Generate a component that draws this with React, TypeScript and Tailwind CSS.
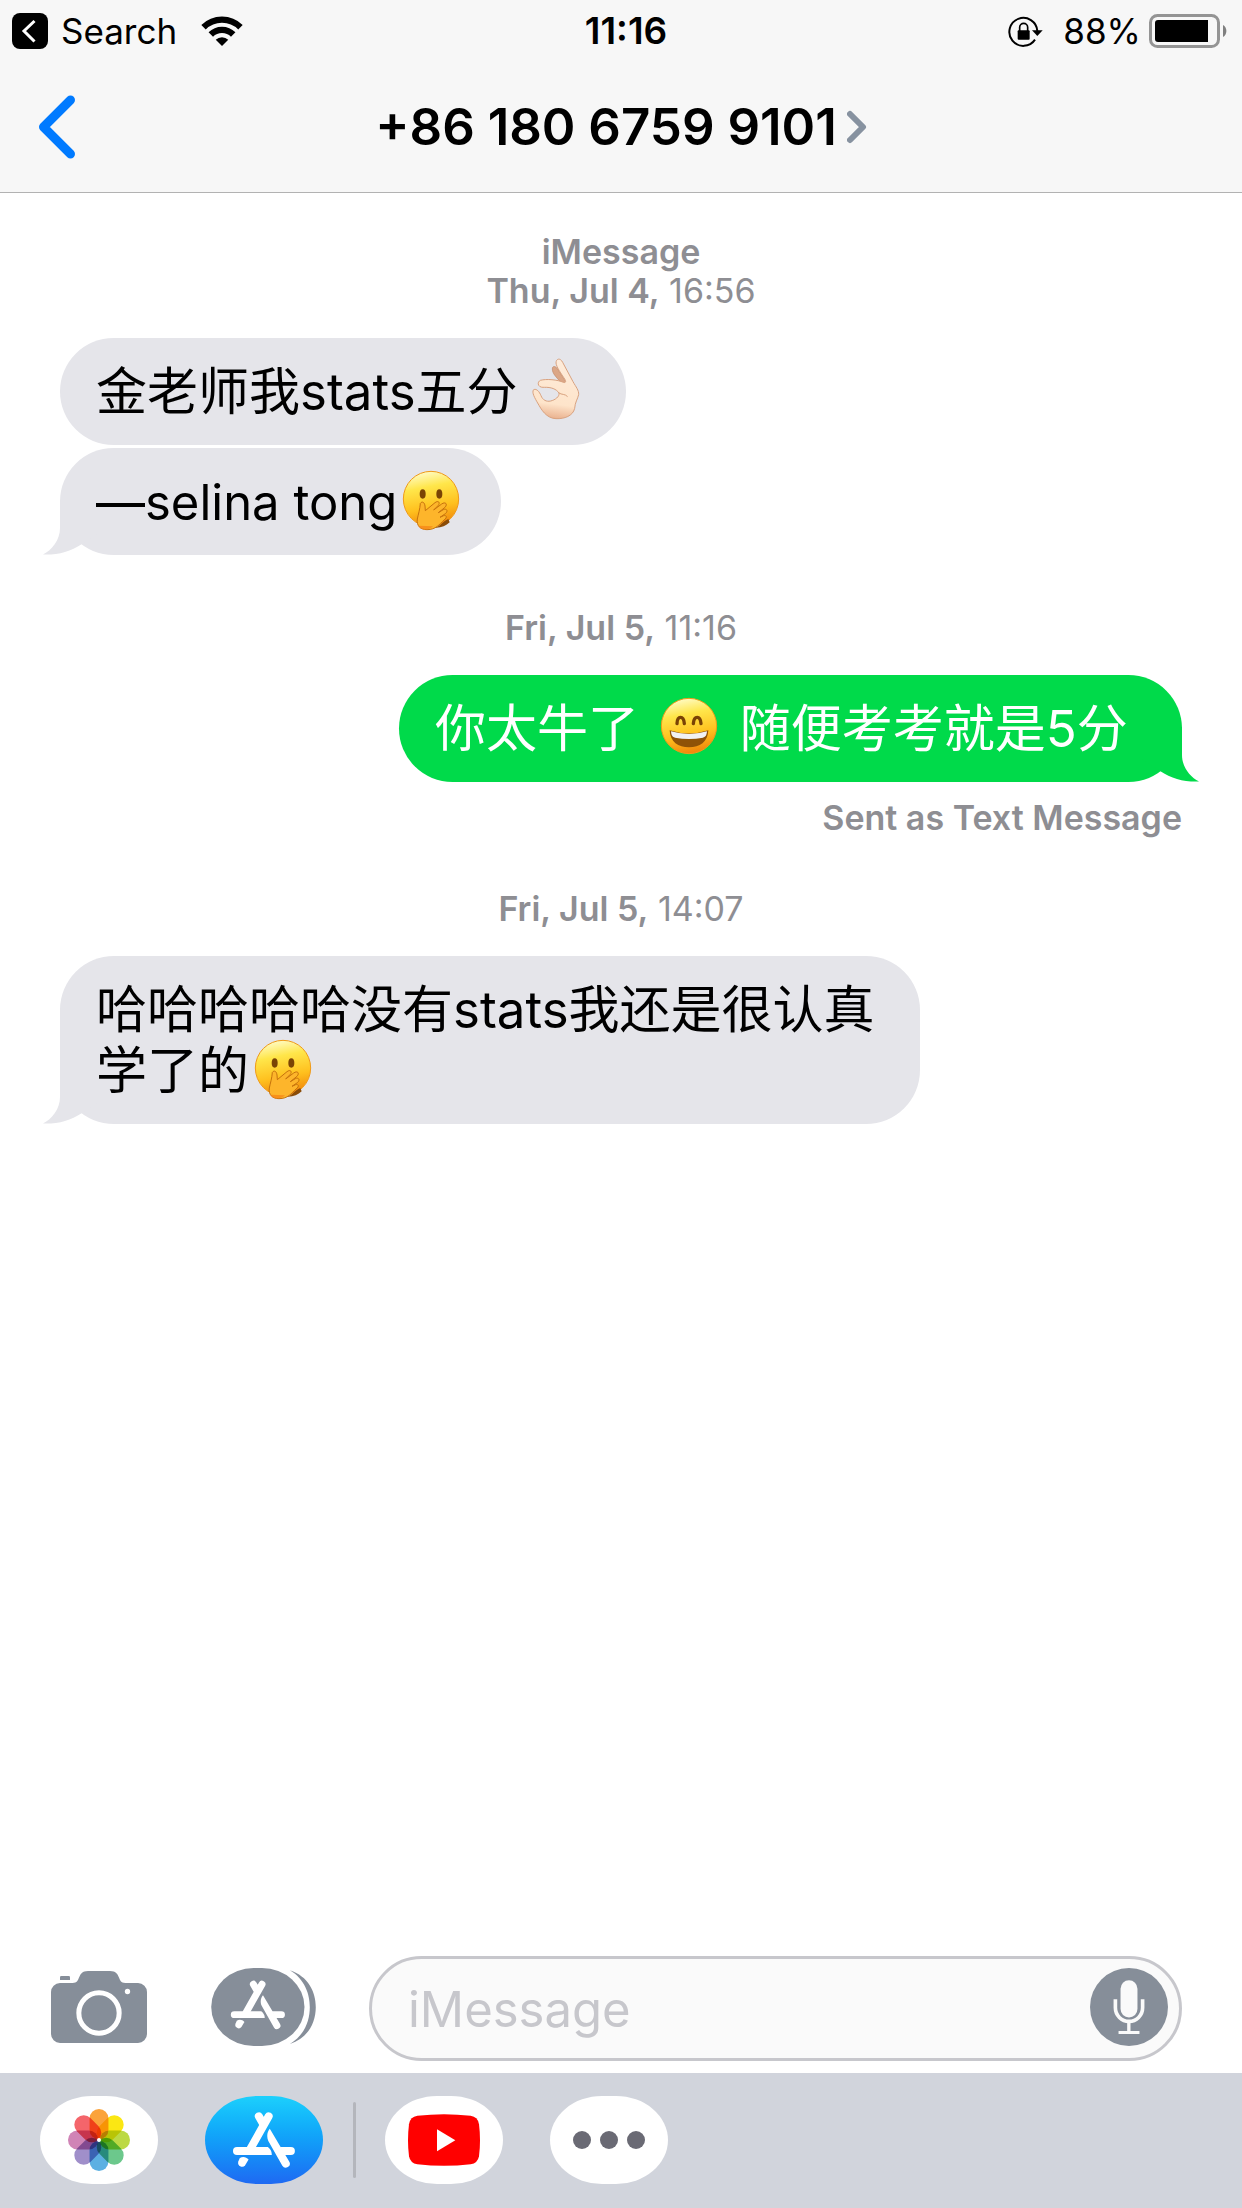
import { useId, type ReactNode } from "react";

const petals = [
  { angle: 0, color: "#fba33a" },
  { angle: 45, color: "#fbe713" },
  { angle: 90, color: "#bcd944" },
  { angle: 135, color: "#6cc88c" },
  { angle: 180, color: "#5cb0e2" },
  { angle: 225, color: "#a08fca" },
  { angle: 270, color: "#d084b6" },
  { angle: 315, color: "#f4656b" },
];

function WifiIcon() {
  return (
    <svg viewBox="603 44 126 91" className="h-[30px] w-[42px]" aria-label="Wi-Fi">
      <g fill="none" stroke="#000" strokeWidth="19">
        <path d="M610 78 A79.5 79.5 0 0 1 722 78" />
        <path d="M632 100 A48 48 0 0 1 700 100" />
      </g>
      <path d="M666 135 L647 116 A27 27 0 0 1 685 116 Z" />
    </svg>
  );
}

function RotationLockIcon() {
  return (
    <svg viewBox="88 43 105 93" className="h-[31px] w-[35px]" aria-label="Rotation locked">
      <path d="M176 88 A42 42 0 1 0 169 114" fill="none" stroke="#000" strokeWidth="6" />
      <path d="M160 86 H192 L176 103 Z" />
      <rect x="117" y="86" width="36" height="28" rx="3" />
      <path d="M123 88 V77 a12 12 0 0 1 24 0 V88" fill="none" stroke="#000" strokeWidth="5" />
    </svg>
  );
}

function BatteryIcon() {
  return (
    <svg viewBox="0 0 79 34" className="h-[34px] w-[79px]" aria-label="Battery 88%">
      <rect x="1.5" y="1.5" width="68" height="31" rx="7" fill="none" stroke="#949494" strokeWidth="3" />
      <path d="M9 6 H59 V28 H9 a3 3 0 0 1 -3 -3 V9 a3 3 0 0 1 3 -3 Z" />
      <path d="M74 11 a7 7 0 0 1 0 12 Z" fill="#808080" />
    </svg>
  );
}

function FaceBase({ id }: { id: string }) {
  return (
    <>
      <defs>
        <linearGradient id={id} x1="0.4" y1="0" x2="0.6" y2="1">
          <stop offset="0" stopColor="#fffbc4" />
          <stop offset="0.28" stopColor="#ffe64a" />
          <stop offset="0.65" stopColor="#ffc01e" />
          <stop offset="1" stopColor="#ef820a" />
        </linearGradient>
      </defs>
      <circle cx="90" cy="90" r="83" fill={`url(#${id})`} stroke="#f09a18" strokeWidth="3" />
    </>
  );
}

function HandOverMouth() {
  const id = useId();
  return (
    <svg viewBox="0 0 180 180" className="-my-2 ml-1 inline-block size-[60px] align-[-1px] overflow-visible" role="img" aria-label="Face with hand over mouth">
      <FaceBase id={id} />
      <ellipse cx="65" cy="75" rx="9" ry="14" fill="#7a4305" />
      <ellipse cx="115" cy="75" rx="9" ry="14" fill="#7a4305" />
      <path d="M98 176 C122 172 120 160 142 150 L146 160 C134 172 118 178 98 176 Z" fill="#8a4c08" />
      <path
        transform="translate(-30 -355)"
        d="M88 458 C94 450 101 456 102 466 L103 480 L132 456 C142 448 149 456 141 465 L128 478 L152 460 C163 452 171 460 162 470 L142 486 L157 477 C168 472 172 482 163 489 L147 500 L158 495 C169 493 168 502 159 508 C145 521 135 537 108 537 C88 537 76 525 79 505 C82 490 87 475 88 458 Z"
        fill="#fdb52b"
        stroke="#c6720d"
        strokeWidth="3"
      />
      <path d="M52 170 C60 186 86 184 96 172 Z" fill="#f58216" opacity="0.7" />
    </svg>
  );
}

function GrinningFace() {
  const id = useId();
  return (
    <svg viewBox="0 0 180 180" className="mx-1.5 -my-2 inline-block size-[60px] align-[-1px]" role="img" aria-label="Grinning face with smiling eyes">
      <FaceBase id={id} />
      <g fill="none" stroke="#7a4305" strokeWidth="10" strokeLinecap="round">
        <path d="M54 83 C55 58 74 58 76 83" />
        <path d="M103 83 C105 58 124 58 126 83" />
      </g>
      <path d="M32 103 Q90 122 148 103 C147 138 122 154 90 154 C58 154 33 138 32 103 Z" fill="#8f5207" />
      <path d="M36 106 Q90 122 144 106 C143 120 138 123 132 125 Q90 133 48 125 C41 123 37 119 36 106 Z" fill="#f1f1f3" />
    </svg>
  );
}

function OkHand() {
  const id = useId();
  return (
    <svg viewBox="405 30 180 180" className="-my-2 ml-2 inline-block size-[60px] align-[-1px] overflow-visible" role="img" aria-label="OK hand">
      <defs>
        <linearGradient id={id} x1="0.5" y1="0" x2="0.4" y2="1">
          <stop offset="0" stopColor="#feecdb" />
          <stop offset="0.75" stopColor="#fee4ca" />
          <stop offset="1" stopColor="#e9b08d" />
        </linearGradient>
      </defs>
      <path d="M510 101 C496 84 484 74 484 60 C484 50 493 50 500 60 L528 104 Z" fill="#dba686" stroke="#c08765" strokeWidth="2" />
      <path
        d="M495 42 C495 28 508 26 515 40 L546 98 C555 114 564 124 563 137 C560 150 552 160 551 178 C546 201 520 210 495 209 C466 208 451 182 440 162 C432 148 421 130 428 122 C437 118 445 128 450 140 C455 153 466 159 479 156 C492 153 506 143 504 132 C496 120 480 114 460 115 C440 117 437 100 448 94 C466 89 500 92 517 100 C524 102 526 98 521 90 C512 76 496 54 495 42 Z"
        fill={`url(#${id})`}
        stroke="#d9a27f"
        strokeWidth="3"
      />
      <path d="M504 132 C512 138 522 134 529 142" fill="none" stroke="#d9a27f" strokeWidth="3" strokeLinecap="round" />
    </svg>
  );
}

function CameraIcon() {
  return (
    <svg viewBox="153 123 288 216" className="h-[72px] w-24" aria-hidden="true">
      <path
        fill="#868e99"
        d="M180 159 H218 C245 159 229 123 264 123 H330 C365 123 350 159 376 159 H414 a27 27 0 0 1 27 27 V312 a27 27 0 0 1 -27 27 H180 a27 27 0 0 1 -27 -27 V186 a27 27 0 0 1 27 -27 Z"
      />
      <path fill="#868e99" d="M180 150 V142 a4 4 0 0 1 4 -4 H206 a4 4 0 0 1 4 4 V150 Z" />
      <circle cx="297" cy="249" r="60.5" fill="none" stroke="#fff" strokeWidth="15" />
      <circle cx="382.5" cy="184.5" r="8" fill="#fff" />
    </svg>
  );
}

function StoreGlyph({ transform }: { transform: string }) {
  return (
    <g transform={transform} fill="#fff">
      <path d="M68 11 L80 32 M94 11 L46 96" stroke="#fff" strokeWidth="21" strokeLinecap="round" />
      <path d="M10.5 92 H92 C98 97 103 104 102 113 H10.5 a10.5 10.5 0 0 1 0 -21 Z" />
      <path d="M124 92 H152.5 a10.5 10.5 0 0 1 0 21 H135 Z" />
      <path d="M97 44 L148 130 A10.5 10.5 0 0 1 130 141 L93 76 C88 64 90 52 97 44 Z" />
      <path d="M18 121 C26 116 35 118 41 125 L32 140 A10.5 10.5 0 0 1 14 130 Z" />
    </g>
  );
}

function AppsIcon() {
  return (
    <svg viewBox="633 113 315 235" className="h-[78px] w-[105px]" aria-hidden="true">
      <rect x="633" y="113" width="281" height="235" rx="128" ry="117.5" fill="#868e99" />
      <path
        fill="#868e99"
        d="M870 120 C925 138 948 185 948 231 C948 277 925 324 870 342 C915 315 930 270 930 231 C930 192 915 147 870 120 Z"
      />
      <StoreGlyph transform="translate(692 151)" />
    </svg>
  );
}

function MicIcon() {
  return (
    <svg viewBox="268 113 235 235" className="size-[78px]" aria-hidden="true">
      <circle cx="385.5" cy="230.5" r="117.5" fill="#868e99" />
      <rect x="360" y="150" width="51" height="112" rx="25.5" fill="#fafafa" />
      <path d="M344.5 207 V233 a41 41 0 0 0 82 0 V207" fill="none" stroke="#fafafa" strokeWidth="11" />
      <path d="M380 276 H390 V303 H417 V312 H354 V303 H380 Z" fill="#fafafa" />
    </svg>
  );
}

function Tail({ side }: { side: "left" | "right" }) {
  return (
    <svg
      viewBox="0 0 60 55"
      className={
        side === "left"
          ? "absolute bottom-0 -left-[17px] h-[55px] w-[60px] fill-[#e5e5ea]"
          : "absolute -right-[17px] bottom-0 h-[55px] w-[60px] -scale-x-100 fill-[#00da4a]"
      }
      aria-hidden="true"
    >
      <path d="M17 0 V28 C17 40 9 50 0 54.5 C15 55 27 52 39 44 L60 30 V0 Z" />
    </svg>
  );
}

function Bubble({ side, tail, children }: { side: "left" | "right"; tail?: boolean; children: ReactNode }) {
  return (
    <div
      className={
        side === "left"
          ? "relative max-w-[860px] self-start rounded-[54px] bg-[#e5e5ea] py-[23px] pr-10 pl-9 text-[51px] leading-[61px] text-black"
          : "relative max-w-[860px] self-end rounded-[54px] bg-[#00da4a] py-[23px] pr-10 pl-9 text-[51px] leading-[61px] text-white"
      }
    >
      {tail && <Tail side={side} />}
      <p className="relative">{children}</p>
    </div>
  );
}

function Stamp({ service, day, time }: { service?: string; day: string; time: string }) {
  return (
    <div className="mb-7 text-center text-[34px] leading-[39px] text-[#8e8e93]">
      {service && <p className="font-semibold">{service}</p>}
      <p>
        <span className="font-semibold">{day}</span> {time}
      </p>
    </div>
  );
}

function DrawerButton({ label, blue, children }: { label: string; blue?: boolean; children: ReactNode }) {
  return (
    <button
      type="button"
      aria-label={label}
      className={
        blue
          ? "flex h-[88px] w-[118px] items-center justify-center rounded-[52px/44px] bg-linear-to-b from-[#1dd0fc] to-[#1f69f2]"
          : "flex h-[88px] w-[118px] items-center justify-center rounded-[52px/44px] bg-white"
      }
    >
      {children}
    </button>
  );
}

export default function App() {
  return (
    <div className="flex min-h-screen flex-col bg-white font-['Inter','Noto_Sans_CJK_SC',sans-serif]">
      <header className="border-b border-[#b2b2b2] bg-[#f7f7f7]">
        <div className="grid h-[62px] grid-cols-[1fr_auto_1fr] items-center pr-0.5 pl-3 text-[35px] leading-[44px]">
          <div className="flex items-center">
            <button type="button" className="flex items-center gap-[13px]">
              <svg viewBox="0 0 36 36" className="size-9" aria-hidden="true">
                <rect width="36" height="36" rx="8" />
                <path d="M22.5 8 L12 18 L22.5 28.5" fill="none" stroke="#fff" strokeWidth="3" />
              </svg>
              <span>Search</span>
            </button>
            <div className="ml-6 flex">
              <WifiIcon />
            </div>
          </div>
          <time className="text-[37px] font-semibold">11:16</time>
          <div className="flex items-center justify-end pr-3">
            <RotationLockIcon />
            <span className="mr-2 ml-5">88%</span>
            <BatteryIcon />
          </div>
        </div>
        <div className="grid h-[130px] grid-cols-[1fr_auto_1fr] items-center px-9">
          <button type="button" aria-label="Back" className="justify-self-start">
            <svg viewBox="0 0 42 66" className="h-[66px] w-[42px]" aria-hidden="true">
              <path d="M34.5 6 L7.5 33 L34.5 60" fill="none" stroke="#007aff" strokeWidth="9" strokeLinecap="round" strokeLinejoin="round" />
            </svg>
          </button>
          <button type="button" className="flex items-center gap-2.5 text-[51px] leading-[60px] font-semibold">
            <h1>+86 180 6759 9101</h1>
            <svg viewBox="0 0 20 34" className="h-[34px] w-5" aria-hidden="true">
              <path d="M3 4 L16 17 L3 30" fill="none" stroke="#8792a0" strokeWidth="6" strokeLinecap="round" strokeLinejoin="round" />
            </svg>
          </button>
        </div>
      </header>

      <main className="flex flex-1 flex-col px-[60px] pt-[39px]">
        <Stamp service="iMessage" day="Thu, Jul 4," time="16:56" />
        <div className="flex flex-col gap-[3px]">
          <Bubble side="left">
            金老师我stats五分
            <OkHand />
          </Bubble>
          <Bubble side="left" tail>
            <span className="text-[49px] leading-none">—selina tong</span>
            <HandOverMouth />
          </Bubble>
        </div>

        <div className="mt-[53px] flex flex-col">
          <Stamp day="Fri, Jul 5," time="11:16" />
          <Bubble side="right" tail>
            你太牛了 <GrinningFace /> 随便考考就是5分&nbsp;
          </Bubble>
          <p className="mt-4 text-right text-[34px] leading-[39px] font-semibold text-[#8e8e93]">Sent as Text Message</p>
        </div>

        <div className="mt-[52px] flex flex-col">
          <Stamp day="Fri, Jul 5," time="14:07" />
          <Bubble side="left" tail>
            哈哈哈哈哈没有stats我还是很认真学了的
            <HandOverMouth />
          </Bubble>
        </div>
      </main>

      <footer>
        <form className="flex items-center pr-[60px] pb-3 pl-[51px]" onSubmit={(e) => e.preventDefault()}>
          <div className="flex shrink-0 items-center gap-16 pb-[3px]">
            <button type="button" aria-label="Camera">
              <CameraIcon />
            </button>
            <button type="button" aria-label="Apps">
              <AppsIcon />
            </button>
          </div>
          <div className="ml-[53px] flex min-w-0 flex-1 items-center rounded-full border-[3px] border-[#c7c7cc] bg-[#fafafa] pt-[9px] pr-[11px] pb-3 pl-9">
            <input
              type="text"
              aria-label="Message"
              placeholder="iMessage"
              className="h-[78px] min-w-0 flex-1 bg-transparent pt-1 text-[49px] outline-none placeholder:text-[#c7c7cc]"
            />
            <button type="button" aria-label="Record audio" className="shrink-0">
              <MicIcon />
            </button>
          </div>
        </form>
        <nav aria-label="App drawer" className="flex h-[135px] items-center bg-[#d1d4dc] px-10 pb-0.5">
          <div className="flex gap-[47px]">
            <DrawerButton label="Photos">
              <svg viewBox="-92 -92 184 184" className="isolate size-[62px]" aria-hidden="true">
                {petals.map((p) => (
                  <rect
                    key={p.angle}
                    x="-28"
                    y="-92"
                    width="56"
                    height="90"
                    rx="28"
                    fill={p.color}
                    transform={`rotate(${p.angle})`}
                    className="mix-blend-multiply"
                  />
                ))}
                <circle r="6" fill="#fff" />
              </svg>
            </DrawerButton>
            <DrawerButton label="App Store" blue>
              <svg viewBox="0 0 187 168" className="h-14 w-[62px]" aria-hidden="true">
                <StoreGlyph transform="scale(1.145)" />
              </svg>
            </DrawerButton>
          </div>
          <div className="mr-[29px] ml-[30px] h-[76px] w-[3px] rounded-full bg-[#b4b6bc]" />
          <div className="flex gap-[47px]">
            <DrawerButton label="YouTube">
              <svg viewBox="174 552 216 155" className="h-[52px] w-[72px]" aria-hidden="true">
                <path
                  fill="#f00"
                  d="M202 557 Q282 547 362 557 Q383 560 387 582 Q393 630 387 678 Q383 699 362 702 Q282 711 202 702 Q181 699 177 678 Q171 630 177 582 Q181 560 202 557 Z"
                />
                <path d="M261 597 L316 630 L261 663 Z" fill="#fff" />
              </svg>
            </DrawerButton>
            <DrawerButton label="More">
              <svg viewBox="0 0 72 18" className="h-[18px] w-[72px] fill-[#6a6a74]" aria-hidden="true">
                <circle cx="9" cy="9" r="9" />
                <circle cx="36" cy="9" r="9" />
                <circle cx="63" cy="9" r="9" />
              </svg>
            </DrawerButton>
          </div>
        </nav>
      </footer>
    </div>
  );
}
